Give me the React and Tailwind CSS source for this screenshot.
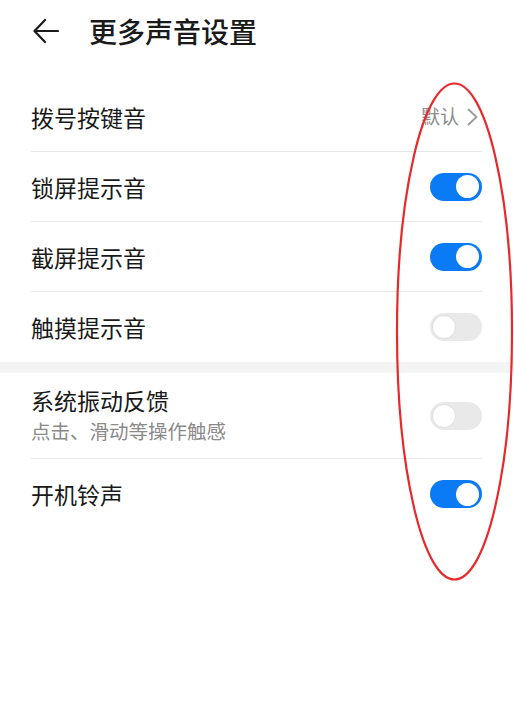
function Toggle({ on }) {
  return on ? (
    <div className="flex h-[28px] w-[52px] items-center justify-end rounded-full bg-[#0a7bf4] px-[3px]">
      <div className="h-[23px] w-[23px] rounded-full bg-white" />
    </div>
  ) : (
    <div className="flex h-[28px] w-[52px] items-center justify-start rounded-full bg-[#e9e9e9] px-[2px]">
      <div className="h-[24px] w-[24px] rounded-full border border-[#dedede] bg-white" />
    </div>
  );
}

function Row({ label, sub, children, last }) {
  return (
    <div
      className={
        "flex items-center justify-between " +
        (sub ? "h-[86px] " : "h-[70px] ") +
        (last ? "" : "border-b border-[#e8e8e8]")
      }
    >
      <div className="flex flex-col">
        <span className="text-[23px] leading-[30px] text-[#191919]">{label}</span>
        {sub && (
          <span className="mt-[1px] text-[19.5px] leading-[30px] text-[#8a8a8a]">{sub}</span>
        )}
      </div>
      {children}
    </div>
  );
}

export default function App() {
  return (
    <div
      className="relative h-[710px] w-[514px] overflow-hidden bg-white"
      style={{ fontFamily: '"Noto Sans CJK SC", "Noto Sans", sans-serif' }}
    >
      {/* header */}
      <div className="flex h-[82px] items-start pt-[10px] pl-[33px]">
        <svg width="26" height="26" viewBox="0 0 26 26" className="mt-[8px]" fill="none" stroke="#1a1a1a" strokeWidth="2.2" strokeLinecap="round" strokeLinejoin="round">
          <path d="M25 13H2" />
          <path d="M12 2L1.5 13L12 24" />
        </svg>
        <h1 className="ml-[30px] text-[28px] font-medium leading-[42px] text-[#1a1a1a]">更多声音设置</h1>
      </div>

      <div className="pl-[31px] pr-[32px]">
        <Row label="拨号按键音">
          <div className="mr-[4px] flex items-center gap-[8px] text-[19px] text-[#8c8c8c]">
            <span>默认</span>
            <svg width="11" height="18" viewBox="0 0 11 18" fill="none" stroke="#9a9a9a" strokeWidth="1.8" strokeLinecap="round" strokeLinejoin="round">
              <path d="M1.5 1.5L9.5 9L1.5 16.5" />
            </svg>
          </div>
        </Row>
        <Row label="锁屏提示音">
          <Toggle on />
        </Row>
        <Row label="截屏提示音">
          <Toggle on />
        </Row>
        <Row label="触摸提示音" last>
          <Toggle />
        </Row>
      </div>

      <div className="h-[11px] bg-[#f4f4f4]" />

      <div className="pl-[31px] pr-[32px]">
        <Row label="系统振动反馈" sub="点击、滑动等操作触感">
          <Toggle />
        </Row>
        <Row label="开机铃声" last>
          <Toggle on />
        </Row>
      </div>

      {/* red annotation ellipse */}
      <svg className="pointer-events-none absolute left-0 top-0" width="514" height="710">
        <ellipse cx="454.5" cy="331.5" rx="57.5" ry="248" fill="none" stroke="#e8292c" strokeWidth="2.2" />
      </svg>
    </div>
  );
}
